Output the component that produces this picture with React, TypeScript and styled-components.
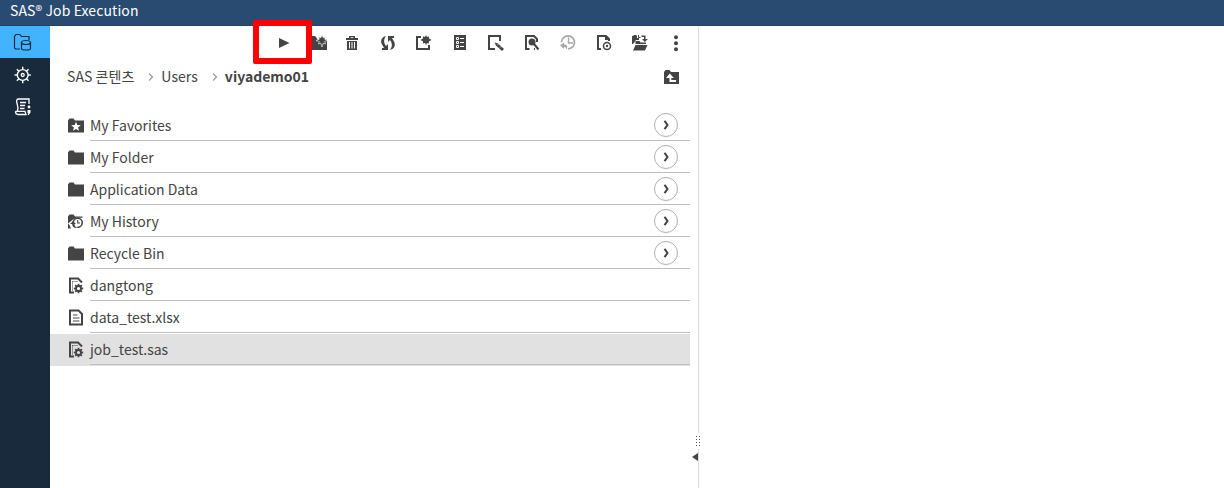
import React from "react";
import styled, { createGlobalStyle } from "styled-components";

const Global = createGlobalStyle`
  * { box-sizing: border-box; }
  body {
    margin: 0;
    background: #fff;
    color: #444;
    font-family: "Noto Sans CJK KR", "Noto Sans", sans-serif;
    font-size: 14px;
    overflow: hidden;
  }
`;

const Page = styled.div`
  display: flex;
  flex-direction: column;
  height: 100vh;
`;
const Header = styled.header`
  display: flex;
  align-items: center;
  flex: none;
  height: 26px;
  padding: 0 10px 5px;
  border-bottom: 1px solid #20426b;
  background: #294b72;
  color: #fff;
  letter-spacing: 0.1px;
  line-height: 20px;
`;
const Main = styled.div`
  display: flex;
  flex: 1;
  min-height: 0;
`;
const Sidebar = styled.nav`
  width: 50px;
  background: #182a3b;
`;
const NavItem = styled.div<{ $active?: boolean }>`
  display: flex;
  align-items: center;
  justify-content: center;
  height: 32px;
  padding-right: 4px;
  padding-top: ${(p) => (p.$active ? 0 : 2)}px;
  background: ${(p) => (p.$active ? "#42b4ff" : "transparent")};
  color: ${(p) => (p.$active ? "#142a40" : "#fff")};
`;
const Panel = styled.section`
  width: 640px;
`;
const Toolbar = styled.div`
  display: flex;
  align-items: center;
  justify-content: flex-end;
  position: relative;
  height: 34px;
  margin-right: -4px;
`;
const Tool = styled.div<{ $disabled?: boolean }>`
  display: flex;
  justify-content: center;
  width: 36px;
  color: ${(p) => (p.$disabled ? "#a8a8a8" : "#444")};
`;
const Highlight = styled.div`
  position: absolute;
  left: 203px;
  top: -6px;
  width: 59px;
  height: 44px;
  border: 6px solid #f00;
  border-radius: 2px;
`;
const Breadcrumb = styled.div`
  display: flex;
  align-items: center;
  height: 34px;
  margin-bottom: 16px;
  padding: 0 7px 0 17px;
  line-height: 22px;
`;
const Crumb = styled.span<{ $current?: boolean }>`
  flex: none;
  padding-bottom: 2px;
  font-weight: ${(p) => (p.$current ? 700 : 400)};
  letter-spacing: ${(p) => (p.$current ? "0" : "0.05px")};
`;
const CrumbArrow = styled.span`
  display: flex;
  justify-content: flex-end;
  width: 20px;
  margin-right: 7px;
`;
const FolderUp = styled.span`
  display: flex;
  margin-left: auto;
`;
const Row = styled.div<{ $selected?: boolean }>`
  display: flex;
  height: 32px;
  padding: 0 0 1px 14px;
  background: ${(p) => (p.$selected ? "#e1e1e1" : "transparent")};
`;
const RowIcon = styled.span`
  display: flex;
  align-items: center;
  width: 26px;
`;
const RowBody = styled.div`
  display: flex;
  align-items: center;
  flex: 1;
  padding-right: 12px;
  border-bottom: 1px solid #bfbfbf;
`;
const Name = styled.span`
  flex: 1;
  line-height: 22px;
`;
const OpenButton = styled.span`
  display: flex;
  align-items: center;
  justify-content: center;
  width: 24px;
  height: 24px;
  border: 1px solid #b0b0b0;
  border-radius: 50%;
`;
const Splitter = styled.div`
  display: flex;
  flex-direction: column;
  width: 16px;
`;
const Rule = styled.div<{ $height?: number }>`
  width: 1px;
  margin-left: 8px;
  flex: ${(p) => (p.$height ? `0 0 ${p.$height}px` : 1)};
  background: #dcdcdc;
`;
const Grip = styled.svg`
  display: block;
  flex: none;
`;

const Icon = ({ size = 24, children }: { size?: number; children: React.ReactNode }) => (
  <svg width={size} height={size} viewBox={`0 0 ${size} ${size}`} fill="currentColor">
    {children}
  </svg>
);

const cog = (cx: number, cy: number, r: number, w: number, tooth: number) => (
  <g fill="none" stroke="currentColor">
    <circle cx={cx} cy={cy} r={r} strokeWidth={w} />
    {[0, 45, 90, 135, 180, 225, 270, 315].map((a) => (
      <path key={a} d={`M${cx} ${cy - r}v${-tooth}`} strokeWidth={w} transform={`rotate(${a} ${cx} ${cy})`} />
    ))}
  </g>
);

const Play = () => <Icon><path d="M11 7l10.500 5L11 17z" /></Icon>;
const NewFolder = () => (
  <Icon>
    <path d="M6 7l1.500-2H13l1 2h9v12H6z" />
    <path d="M12 2h12v6h-1l-5 6-2-4-5-2z" fill="#fff" />
    <path d="M6 6h6l2 3-2 1H6zM20 11l3-2v6h-4z" />
    <path d="M18 4l1.200 2.800 2.300-.8-.8 2.200 2.500 1.300-2.500 1 .8 2.500-2.300-.8L18 16l-1.200-3.800-2.300.8.8-2.500-3.300-1 3.300-1.300-.8-2.200 2.300.8z" stroke="#fff" strokeWidth=".6" />
  </Icon>
);
const Trash = () => (
  <Icon>
    <path d="M6 7h3V5h6v2h3v2H6zM10.500 6.200V7h3v-.8zM7 10h10v9H7z" fillRule="evenodd" />
    <path d="M9.500 11v6.500M12 11v6.500M14.500 11v6.500" stroke="#fff" />
  </Icon>
);
const Refresh = () => (
  <Icon>
    <path d="M10 5C6 6 4.500 9 5.500 12.500L8 17H6v2h6v-6l-2 2C7.500 12 7.500 8 10 5z" />
    <path d="M14 19c4-1 5.500-4 4.500-7.500L16 7h2V5h-6v6l2-2c2.500 3 2.500 7 0 10z" />
  </Icon>
);
const NewItem = () => (
  <Icon>
    <path d="M9 6H5v12h12v-4" fill="none" stroke="currentColor" strokeWidth="2" />
    <path d="M14 4l1 2 2-.8-.2 2 2.700 1.800-2.700 1.500.2 2-2-.5-1 2-1-2-2.200.5.3-2L8.500 9l2.600-1.800-.3-2 2.200.8z" />
  </Icon>
);
const ListDoc = () => (
  <Icon>
    <path d="M6 4h12v15H6z" />
    <path d="M8.500 6.500h2v2h-2zM8.500 10.500h2v2h-2zM8.500 14.500h2v2h-2zM12 7.500h4M12 11.500h4M12 15.500h4" fill="none" stroke="#fff" />
  </Icon>
);
const Edit = () => (
  <Icon>
    <path d="M16 10V5H5v13h6" fill="none" stroke="currentColor" strokeWidth="2" />
    <path d="M10.500 11.500l3.500 1 6 5.500-2 2-6-5.500z" />
    <path d="M13.500 14l1.500-1.500M16 16.500l2-2" stroke="#fff" strokeWidth=".7" />
  </Icon>
);
const Search = () => (
  <Icon>
    <path d="M9.500 18H6V5h8l3 3v3M14 18h1" fill="none" stroke="currentColor" strokeWidth="2" />
    <circle cx="12" cy="11" r="3.500" />
    <path d="M14 13l4.500 5.500" stroke="currentColor" strokeWidth="2" />
  </Icon>
);
const History = () => (
  <Icon>
    <path d="M5.500 11A6.500 6.500 0 1 1 12 17.800" fill="none" stroke="currentColor" strokeWidth="1.700" />
    <path d="M12.500 6.500V12H17" fill="none" stroke="currentColor" strokeWidth="1.400" />
    <path d="M4 14.500l4-3v2c3 0 4 2 2.500 5.500 0-2-1-3-2.500-3v2z" />
  </Icon>
);
const DocView = () => (
  <Icon>
    <path d="M9 18H6V5h8l3 3v2" fill="none" stroke="currentColor" strokeWidth="2" />
    <path d="M13 4l5 5h-5z" />
    <circle cx="15" cy="15" r="3.500" fill="#fff" stroke="currentColor" strokeWidth="1.500" />
    <circle cx="15" cy="15" r="1.200" />
  </Icon>
);
const MoveTo = () => (
  <Icon>
    <path d="M4 5h1l1-1h2l1 1v2h2v2H8l-3 4H4zM7.500 10h4l1 1.500H18V13H7.500zM7.500 14H19.500L17 19.500H5z" />
    <path d="M10.500 4v2.500h2" fill="none" stroke="currentColor" />
    <path d="M13.500 4.500h4V8H20l-3.200 3L14 8h2V6h-2.500z" />
  </Icon>
);
const More = () => (
  <Icon><circle cx="12" cy="6.300" r="2" /><circle cx="12" cy="12.300" r="2" /><circle cx="12" cy="18.200" r="2" /></Icon>
);

const tools = [Play, NewFolder, Trash, Refresh, NewItem, ListDoc, Edit, Search, History, DocView, MoveTo, More];

const folderPath = "M4 6.500L5.500 4.500h4L11 6.500h9V18.500H4z";
const Folder = () => <Icon><path d={folderPath} /></Icon>;
const Favorites = () => (
  <Icon>
    <path d={folderPath} />
    <path d="M12 7.800l1.300 3.200 3.500.2-2.700 2.200.9 3.300-3-1.800-3 1.800.9-3.300-2.700-2.200 3.500-.2z" fill="#fff" />
  </Icon>
);
const FolderHistory = () => (
  <Icon>
    <path d="M4 6.500l1.500-2h4l1.500 2h7.500v1.300h-6L9 9.500 4 13.500zM4 13.500l1.500 1.500L7 18.500H4z" />
    <path d="M9.300 12a4.500 4.500 0 1 1 4 5.200" fill="none" stroke="currentColor" strokeWidth="1.600" />
    <path d="M13.700 10v3h2.300" fill="none" stroke="currentColor" strokeWidth="1.100" />
    <path d="M6 14l3-3 3 3h-1.600c.2 2 1.300 3.300 3.100 4-3.500.3-5.300-1.300-5.300-4z" />
  </Icon>
);
const JobFile = ({ backdrop = "#fff" }: { backdrop?: string }) => (
  <Icon>
    <path d="M10 18.500H6v-14h8l4 4" fill="none" stroke="currentColor" strokeWidth="2" />
    <path d="M8.500 7.500h6M8.500 7.500v9" stroke="currentColor" strokeDasharray="1 1" />
    <circle cx="14.500" cy="14.500" r="4.800" fill={backdrop} />
    {cog(14.5, 14.5, 2.5, 1.8, 2.2)}
  </Icon>
);
const TextFile = () => (
  <Icon>
    <path d="M6 4.500h8.500L18 8V18.500H6z" fill="none" stroke="currentColor" strokeWidth="2" />
    <path d="M9 9h4.500M9 12h6.500M9 15h6.500" stroke="currentColor" />
  </Icon>
);

const rows = [
  { name: "My Favorites", icon: <Favorites />, folder: true },
  { name: "My Folder", icon: <Folder />, folder: true },
  { name: "Application Data", icon: <Folder />, folder: true },
  { name: "My History", icon: <FolderHistory />, folder: true },
  { name: "Recycle Bin", icon: <Folder />, folder: true },
  { name: "dangtong", icon: <JobFile /> },
  { name: "data_test.xlsx", icon: <TextFile /> },
  { name: "job_test.sas", icon: <JobFile backdrop="#e1e1e1" />, selected: true },
];

const Separator = () => (
  <CrumbArrow>
    <svg width="6" height="10" viewBox="0 0 6 10"><path d="M1 1.500L4.500 5 1 8.500" fill="none" stroke="#999" strokeWidth="1.200" /></svg>
  </CrumbArrow>
);

export default function App() {
  return (
    <Page>
      <Global />
      <Header>SAS® Job Execution</Header>
      <Main>
        <Sidebar>
          <NavItem $active>
            <Icon>
              <path d="M9 19H4.500L3.500 18V6.500L5 4.500h4l1.500 2H18V10" fill="none" stroke="currentColor" strokeWidth="1.200" />
              <path d="M10.500 12.500v6c0 2 9 2 9 0v-6" fill="none" stroke="currentColor" strokeWidth="1.200" />
              <ellipse cx="15" cy="12.500" rx="4.500" ry="2" fill="none" stroke="currentColor" strokeWidth="1.200" />
            </Icon>
          </NavItem>
          <NavItem>
            <Icon>
              {cog(11.7, 12, 5.4, 1.4, 2.8)}
              <circle cx="11.700" cy="12" r="1.500" fill="none" stroke="currentColor" strokeWidth="1.300" />
            </Icon>
          </NavItem>
          <NavItem>
            <Icon>
              <path d="M18 9V4H7.500C5 4 5.500 7 6.300 9.500S7 14 6.500 16M4.500 16.300H14l1 3.200H7c-2 0-2.500-1.500-2.500-3.200M9 7.500h6M9 10.500h5M9 13.500h4.500" fill="none" stroke="currentColor" strokeWidth="1.300" />
              <circle cx="18" cy="12" r="1.400" />
              <path d="M16.500 15h3v2.500L17.700 20h-1l.6-2h-.8z" />
            </Icon>
          </NavItem>
        </Sidebar>
        <Panel>
          <Toolbar>
            {tools.map((Glyph, i) => (
              <Tool key={i} $disabled={Glyph === History}><Glyph /></Tool>
            ))}
            <Highlight />
          </Toolbar>
          <Breadcrumb>
            <Crumb>SAS 콘텐츠</Crumb>
            <Separator />
            <Crumb>Users</Crumb>
            <Separator />
            <Crumb $current>viyademo01</Crumb>
            <FolderUp>
              <Icon>
                <path d="M5 7l1.500-2h4L12 7h8v12H5z" />
                <path d="M10.800 8.500l4 4.500h-2.500v2H17v2h-6.500v-4H7z" fill="#fff" />
              </Icon>
            </FolderUp>
          </Breadcrumb>
          {rows.map((r) => (
            <Row key={r.name} $selected={r.selected}>
              <RowIcon>{r.icon}</RowIcon>
              <RowBody>
                <Name>{r.name}</Name>
                {r.folder && (
                  <OpenButton>
                    <svg width="8" height="10" viewBox="0 0 8 10"><path d="M2.500 .8L5.500 5 2.500 9.200" fill="none" stroke="#444" strokeWidth="2" /></svg>
                  </OpenButton>
                )}
              </RowBody>
            </Row>
          ))}
        </Panel>
        <Splitter>
          <Rule $height={407} />
          <Grip width="16" height="16" fill="#555">
            {[3, 6, 9, 12].map((y) => (
              <g key={y}><rect x="6" y={y} width="1" height="1" /><rect x="9" y={y} width="1" height="1" /></g>
            ))}
          </Grip>
          <Grip width="16" height="16">
            <path d="M8 0h1v16H8z" fill="#dcdcdc" />
            <path d="M2 8l6-4v8z" fill="#444" />
          </Grip>
          <Rule />
        </Splitter>
      </Main>
    </Page>
  );
}
